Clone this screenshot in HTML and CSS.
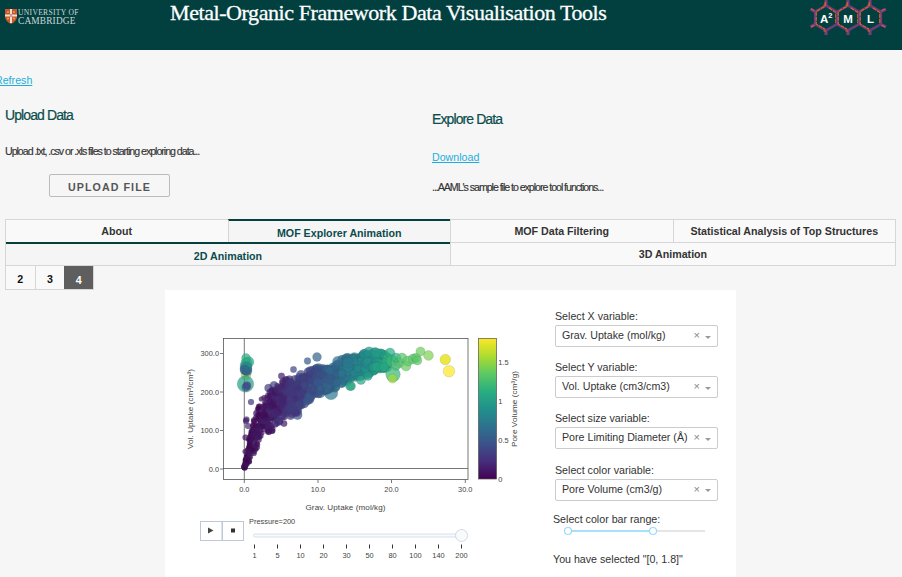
FILE: index.html
```html
<!DOCTYPE html>
<html lang="en">
<head>
<meta charset="utf-8">
<title>Metal-Organic Framework Data Visualisation Tools</title>
<link rel="stylesheet" href="styles.css">
</head>
<body>
<header class="banner">
  <div class="brand">
    <svg class="crest" width="12" height="15" viewBox="0 0 12 15">
      <path d="M0 0H12V8Q11.500 12.500 6 15Q.5 12.500 0 8Z" fill="#c9552d"/>
      <path d="M6 0V14M0 6.500H12" stroke="#f1e2d8" stroke-width="2"/>
      <path d="M2 3H4M8 3H10M2 9.500H4M8 9.500H10" stroke="#e5a34c" stroke-width="1.500"/>
      <path d="M6 5V8" stroke="#b34b34"/>
    </svg>
    <div class="brand-name"><span class="brand-top">UNIVERSITY OF</span><span class="brand-bottom">CAMBRIDGE</span></div>
  </div>
  <h1 class="title">Metal-Organic Framework Data Visualisation Tools</h1>
  <svg class="lab-logo" width="78" height="36" viewBox="0 0 78 36">
    <defs>
      <g id="ring">
        <path d="M0-12.500L10.800-6.300V6.300L0 12.500L-10.800 6.300V-6.300Z" fill="none" stroke="#6f3a78" stroke-width="2.600"/>
        <path d="M0-12.500V-18M0 12.500V17" stroke="#7c3c7b" stroke-width="3"/>
        <path d="M-1.500-11.500L-9.800-6.500V6L-1 11.300M-.8-12V-17M9.800 5V-5.500L2-10.800" fill="none" stroke="#d9642a" stroke-width="1.200" stroke-dasharray="4 1"/>
        <path d="M-2.500-13H-.5M-2.500 13H0" stroke="#d9642a" stroke-width="1.200"/>
      </g>
    </defs>
    <path d="M5.200 11.700L.5 9M5.200 24.300L.5 27M70.800 11.700L76 9M70.800 24.300L76 27" stroke="#7c3c7b" stroke-width="3"/>
    <path d="M5 11L1 8.500M5 25L1 27M71 11L75 9M71 25L75 27" stroke="#d9642a"/>
    <use href="#ring" x="16" y="18"/><use href="#ring" x="38" y="18"/><use href="#ring" x="60" y="18"/>
    <g class="lab-text"><text x="10" y="22.500">A</text><text class="lab-sup" x="18.300" y="18">2</text><text x="33.300" y="22.500">M</text><text x="57" y="22.500">L</text></g>
  </svg>
</header>

<a class="link refresh" href="#">Refresh</a>

<section class="sources">
  <div class="source">
    <h2 class="heading">Upload Data</h2>
    <p class="hint">Upload .txt, .csv or .xls files to starting exploring data...</p>
    <button class="upload">UPLOAD FILE</button>
  </div>
  <div class="source source-explore">
    <h2 class="heading">Explore Data</h2>
    <a class="link" href="#">Download</a>
    <p class="hint hint-sample">...AAML's sample file to explore tool functions...</p>
  </div>
</section>

<nav class="tabs">
  <div class="tab">About</div>
  <div class="tab selected">MOF Explorer Animation</div>
  <div class="tab">MOF Data Filtering</div>
  <div class="tab">Statistical Analysis of Top Structures</div>
</nav>
<nav class="tabs tabs-sub">
  <div class="tab selected">2D Animation</div>
  <div class="tab">3D Animation</div>
</nav>
<nav class="dims">
  <div class="dim">2</div><div class="dim">3</div><div class="dim dim-on">4</div>
</nav>

<main class="panel">
  <svg class="chart" width="380" height="287" viewBox="165 290 380 287">
    <defs>
      <linearGradient id="viridis" x1="0" y1="1" x2="0" y2="0">
        <stop offset="0" stop-color="#440154"/><stop offset=".125" stop-color="#472d7b"/>
        <stop offset=".25" stop-color="#3b528b"/><stop offset=".375" stop-color="#2c728e"/>
        <stop offset=".5" stop-color="#21918c"/><stop offset=".625" stop-color="#28ae80"/>
        <stop offset=".75" stop-color="#5ec962"/><stop offset=".875" stop-color="#addc30"/>
        <stop offset="1" stop-color="#fde725"/>
      </linearGradient>
    </defs>
    <path class="zero" d="M244.300 338V480M223 468.500H468"/>
    <g id="points"></g>
    <rect class="frame" x="223.500" y="338.500" width="244.500" height="141"/>
    <path class="ticks" d="M220 353.500H223M220 392H223M220 430.500H223M220 469H223M244.300 480V483M318 480V483M391.500 480V483M465.300 480V483"/>
    <g class="axis end">
      <text x="219" y="356">300.0</text><text x="219" y="394.500">200.0</text><text x="219" y="433">100.0</text><text x="219" y="471.500">0.0</text>
    </g>
    <g class="axis mid">
      <text x="244.300" y="491.500">0.0</text><text x="318" y="491.500">10.0</text><text x="391.500" y="491.500">20.0</text><text x="465.300" y="491.500">30.0</text>
    </g>
    <text class="axis-title" x="345.500" y="510" textLength="80">Grav. Uptake (mol/kg)</text>
    <text class="axis-title" transform="translate(193 409) rotate(-90)" textLength="80">Vol. Uptake (cm³/cm³)</text>
    <rect x="478.500" y="338.500" width="18" height="140.500" fill="url(#viridis)" stroke="#555" stroke-width=".7"/>
    <g class="axis">
      <text x="498.300" y="365">1.5</text><text x="498.300" y="404">1</text><text x="498.300" y="443">0.5</text><text x="498.300" y="482">0</text>
    </g>
    <text class="axis-title" transform="translate(517 409) rotate(-90)" textLength="76">Pore Volume (cm³/g)</text>

    <rect class="play" x="200.500" y="521.500" width="21.500" height="19"/>
    <rect class="play" x="222.500" y="521.500" width="21" height="19"/>
    <path d="M208 527.500L213.500 530.500L208 533.500Z" fill="#444"/>
    <rect x="231" y="528.500" width="4" height="4" fill="#333"/>
    <text class="axis" x="249" y="524">Pressure=200</text>
    <rect class="rail" x="253.500" y="534" width="208" height="3" rx="1.500"/>
    <circle class="grip" cx="461.500" cy="535.500" r="6"/>
    <g id="steps" class="axis mid"></g>
  </svg>

  <aside class="controls">
    <label class="label">Select X variable:</label>
    <div class="select"><span>Grav. Uptake (mol/kg)</span><i class="clear">×</i><i class="caret"></i></div>
    <label class="label">Select Y variable:</label>
    <div class="select"><span>Vol. Uptake (cm3/cm3)</span><i class="clear">×</i><i class="caret"></i></div>
    <label class="label">Select size variable:</label>
    <div class="select"><span>Pore Limiting Diameter (Å)</span><i class="clear">×</i><i class="caret"></i></div>
    <label class="label">Select color variable:</label>
    <div class="select"><span>Pore Volume (cm3/g)</span><i class="clear">×</i><i class="caret"></i></div>
    <div class="range-label">Select color bar range:</div>
    <svg class="range" width="144" height="10" viewBox="0 0 144 10">
      <path d="M5 5H142" stroke="#e5e5e5" stroke-width="2"/>
      <path d="M5 5H90" stroke="#a6e0fa" stroke-width="2"/>
      <circle cx="5" cy="5" r="3.500" fill="#fff" stroke="#96dbfa" stroke-width="1.200"/>
      <circle cx="90" cy="5" r="3.500" fill="#fff" stroke="#96dbfa" stroke-width="1.200"/>
    </svg>
    <div class="range-label range-value">You have selected "[0, 1.8]"</div>
  </aside>
</main>
<script src="chart.js"></script>
</body>
</html>
```
FILE: styles.css
```css
* { box-sizing: border-box; }
body {
  margin: 0;
  height: 577px;
  overflow: hidden;
  background: #f6f6f6;
  color: #333;
  font: 10.67px/14px "Liberation Sans", Arial, sans-serif;
}
.banner {
  height: 50px;
  display: flex;
  align-items: flex-start;
  background: #024040;
  color: #fff;
}
.brand { display: flex; width: 170px; padding: 9px 0 0 5px; gap: 1px; }
.brand-name {
  display: flex;
  flex-direction: column;
  font-family: "Liberation Serif", serif;
  color: #c9d8d7;
}
.brand-top { font-size: 7.6px; line-height: 8px; letter-spacing: .3px; }
.brand-bottom { font-size: 9.4px; line-height: 8px; letter-spacing: .15px; }
.title {
  width: 640px;
  margin: 0;
  font: 400 22px/26px "Liberation Serif", serif;
  letter-spacing: -.42px;
  -webkit-text-stroke: .3px #fff;
  white-space: nowrap;
}
.lab-text { fill: #fff; font-size: 11.5px; font-weight: bold; }
.lab-sup { font-size: 7.5px; }
.link { color: #1eaedb; text-decoration: underline; }
.refresh { display: block; margin: 23px 0 0 -5px; }
.sources { display: flex; height: 132px; padding-left: 5px; }
.source { width: 427px; padding-top: 19px; }
.source-explore { padding-top: 23px; }
.heading {
  margin: 0 0 20px;
  color: #0b4c4c;
  font-size: 14px;
  font-weight: 400;
  line-height: 18px;
  letter-spacing: -.9px;
  -webkit-text-stroke: .2px #0b4c4c;
}
.source-explore .heading { margin-bottom: 22px; }
.hint { margin: 0; letter-spacing: -1.04px; white-space: nowrap; -webkit-text-stroke: .15px #333; }
.hint-sample { margin-top: 16px; letter-spacing: -1.05px; }
.upload {
  display: block;
  width: 121px;
  height: 23px;
  margin: 16px 0 0 44px;
  padding: 2px 0 0;
  border: 1px solid #bbb;
  border-radius: 2px;
  background: transparent;
  color: #555;
  font: bold 10.67px/18px "Liberation Sans", Arial, sans-serif;
  letter-spacing: 1.07px;
}
.tabs {
  display: flex;
  height: 24px;
  width: 891px;
  margin-left: 5px;
  border: 1px solid #d6d6d6;
  font-weight: bold;
  text-align: center;
}
.tab { flex: 1; background: #f9f9f9; line-height: 23px; }
.tab + .tab { border-left: 1px solid #d6d6d6; }
.tab.selected {
  margin-top: -1px;
  border-top: 2px solid #063f3f;
  background: #f5f5f5;
  color: #0b4c4c;
  line-height: 24px;
}
.tabs-sub { margin-top: -1px; }
.dims { display: flex; width: 89px; height: 24px; margin-left: 5px; border: 1px solid #d6d6d6; border-top: 0; font-weight: bold; color: #111; }
.dim { flex: 1; background: #f9f9f9; line-height: 27px; text-align: center; }
.dim + .dim { border-left: 1px solid #d6d6d6; }
.dim.dim-on { background: #5e5e5e; color: #fff; border: 0; line-height: 28px; }
.panel { display: flex; width: 571px; height: 287px; margin-left: 165px; background: #fff; }
.chart { flex: none; font-family: "Liberation Sans", Arial, sans-serif; }
.zero, .frame { fill: none; stroke: #555; stroke-width: .8; }
.ticks { stroke: #555; stroke-width: .8; }
.axis { font-size: 7.4px; fill: #444; }
.axis.end { text-anchor: end; }
.axis.mid { text-anchor: middle; }
.axis-title { font-size: 8.1px; fill: #444; text-anchor: middle; }
.play { fill: #fff; stroke: #bec8d9; }
.rail { fill: #f8fafc; stroke: #cfd9e6; stroke-width: .8; }
.grip { fill: #f8fafc; stroke: #c5d0df; stroke-width: .8; }
.step { stroke: #333; stroke-width: 1; }
.controls { padding: 19px 0 0 10px; width: 191px; }
.label { display: block; height: 16px; }
.select {
  display: flex;
  align-items: center;
  width: 163px;
  height: 22px;
  margin-bottom: 13.2px;
  padding: 0 6px 2px 6px;
  border: 1px solid #ccc;
  border-radius: 2px;
  white-space: nowrap;
}
.clear { margin-left: auto; font-style: normal; font-size: 11px; color: #888; }
.caret { margin: 4px 0 0 5px; border: 3px solid transparent; border-top-color: #999; border-bottom: 0; }
.range-label { margin: -2px 0 0 -2px; }
.range { display: block; margin: 0 0 0 8px; }
.range-value { margin-top: 16px; }
```
FILE: chart.js
```js
const NS = "http://www.w3.org/2000/svg";
const points = document.getElementById("points");
const stops = [[68,1,84],[71,45,123],[59,82,139],[44,114,142],[33,145,140],[40,174,128],[94,201,98],[173,220,48],[253,231,37]];

function viridis(t) {
  const p = Math.max(0, Math.min(0.9999, t)) * 8;
  const i = Math.floor(p);
  const c = stops[i].map((v, k) => Math.round(v + (stops[i + 1][k] - v) * (p - i)));
  return `rgb(${c})`;
}

let seed = 7;
function rnd() {
  seed = (seed * 16807) % 2147483647;
  return seed / 2147483647;
}

function dot(x, y, r, t, o = 0.7) {
  const c = document.createElementNS(NS, "circle");
  c.setAttribute("cx", x.toFixed(1));
  c.setAttribute("cy", y.toFixed(1));
  c.setAttribute("r", r.toFixed(1));
  c.setAttribute("fill", viridis(t));
  c.setAttribute("fill-opacity", o);
  c.setAttribute("stroke", "#2f4f4f");
  c.setAttribute("stroke-opacity", ".4");
  c.setAttribute("stroke-width", ".35");
  points.appendChild(c);
}

// x, upper edge, lower edge of the cloud, marker radius, colour position
const band = [
  [244, 466, 469, 2.4, 0], [252, 424, 458, 2.6, 0.01], [260, 400, 443, 2.9, 0.03],
  [273, 388, 431, 3.3, 0.07], [287, 379, 419, 3.7, 0.13], [300, 375, 411, 4, 0.18],
  [313, 369, 397, 4.3, 0.23], [327, 366, 391, 4.6, 0.3], [340, 359, 385, 4.8, 0.36],
  [353, 356, 378, 4.8, 0.43], [367, 353, 375, 4.8, 0.49], [380, 353, 369, 4.8, 0.55],
  [392, 357, 367, 4.6, 0.66], [404, 357, 364, 4.6, 0.72], [418, 356, 361, 4.4, 0.76]
];

function at(x) {
  let i = 0;
  while (i < band.length - 2 && band[i + 1][0] < x) i++;
  const a = band[i], b = band[i + 1], f = (x - a[0]) / (b[0] - a[0]);
  return a.map((v, k) => v + (b[k] - v) * f);
}

// single markers above and below the main cloud
[[246,375,5,.85],[245.500,384,8.300,.55],[246,387,4.300,.28],[247,385.500,4,.2],[246,369,6,.35],[245.500,366,5.500,.4],
 [247,371,5,.3],[246.500,363,5.600,.6],[248.500,362,5.500,.6],[246,358,4.500,.62],[247,367,5,.45],[245,370,5,.3],
 [246.500,419.500,3,.1],[246,421,3,.06],[248,426,3,.12],[245.500,437.500,3,.05],[245,451.500,2.500,.03],
 [251,402,3,.14],[268.500,388,4,.18],[274,385.500,4.300,.18],[281.500,376,3.300,.08],[293.500,369.500,3.200,.2],
 [307.500,361,3.400,.28],[317,357,4.500,.31],[331,393,6.800,.4],[351,386,4.600,.58],[360,375,6,.45],
 [297.500,415,4.700,.24],[298,411,4,.2],[284,423.500,3.200,.06]
].forEach(p => dot(...p));

for (let n = 0; n < 950; n++) {
  const x = 244 + 144 * Math.pow(rnd(), 1.3);
  const b = at(x);
  // mean of two draws for half of the markers thins out the edges
  const v = n % 2 ? rnd() : (rnd() + rnd()) / 2;
  dot(x, b[1] + (b[2] - b[1]) * v, b[3] * (0.75 + 0.45 * rnd()), b[4] + (v - 0.5) * 0.02 + (rnd() - 0.5) * 0.08);
}

[[350,386,4.600,.6],[361,380,4.600,.58],[368,376,4.500,.56],[377,367,5,.58],[384,367,4.500,.6],[369,352,5.200,.5],
 [376,353,5.200,.55],[390,353,5,.6],[392,361,6,.67],[396,358,5,.63],[399,363,5,.7],[402,358,5,.72],[396,366,4.500,.7],
 [393,374.500,7.300,.66],[392.500,378.500,4.600,.86],[406,366,5,.76],[408,361,5,.75],[413,359,5,.74],[416,358,4.800,.72],
 [417.500,360.500,4.500,.75],[420.500,351.500,4.600,.77],[428.500,355.500,4.900,.8],[445.300,359.500,5.300,.97,.88],[449,371.200,5.800,1,.7]
].forEach(p => dot(...p));

const steps = document.getElementById("steps");
["1", "5", "10", "20", "30", "50", "80", "100", "140", "200"].forEach((label, i) => {
  const x = 254.500 + i * 23;
  const tick = document.createElementNS(NS, "path");
  tick.setAttribute("class", "step");
  tick.setAttribute("d", `M${x} 544.500V548.500`);
  const text = document.createElementNS(NS, "text");
  text.setAttribute("x", x);
  text.setAttribute("y", 558);
  text.textContent = label;
  steps.append(tick, text);
});
```
